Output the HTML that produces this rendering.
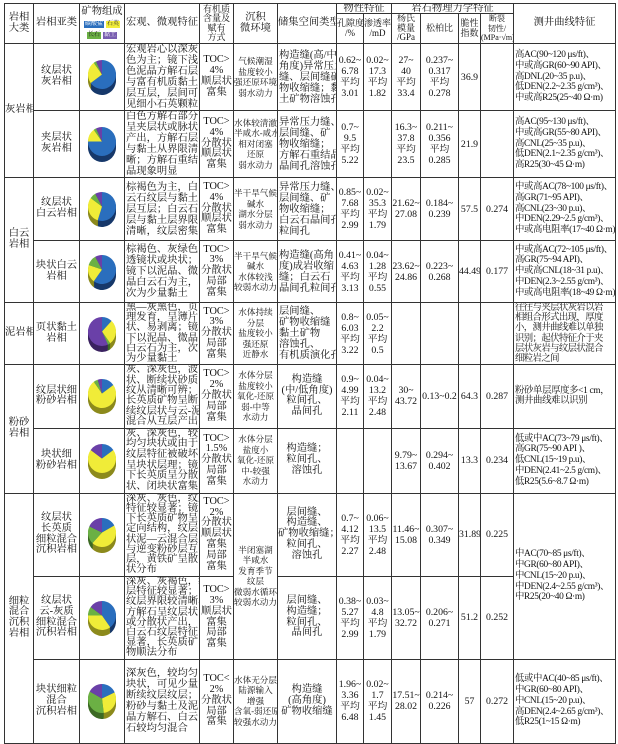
<!DOCTYPE html>
<html><head><meta charset="utf-8">
<style>
html,body{margin:0;padding:0;background:#fff;width:618px;height:737px;overflow:hidden}
body{font-family:"Liberation Serif","Noto Serif CJK SC",serif;color:#111}
table{position:absolute;left:4px;top:3px;border-collapse:collapse;table-layout:fixed;width:611px}
td{border:1px solid #333;padding:0;text-align:center;vertical-align:middle;font-size:10.3px;line-height:10.8px;white-space:nowrap;overflow:hidden}
.l{text-align:left;padding-left:1px;line-height:11px}
.e{font-size:8.6px;line-height:10.5px}
.n{font-size:9.8px;line-height:11px}
.g{font-size:9.4px;line-height:10.8px;text-align:left;padding-left:1px;letter-spacing:-0.35px}
.s{font-size:9px;line-height:9.5px}
.lg{display:inline-block;font-size:6px;line-height:7px;color:#222;padding:0 1px;margin:1px 1px}
</style></head><body>
<table>
<colgroup>
<col style="width:29px"><col style="width:46px"><col style="width:45px"><col style="width:75px"><col style="width:34px"><col style="width:44px"><col style="width:59px"><col style="width:27px"><col style="width:28px"><col style="width:29px"><col style="width:38px"><col style="width:22px"><col style="width:33px"><col style="width:102px">
</colgroup>
<tr style="height:10px">
<td rowspan="2">岩相<br>大类</td><td rowspan="2">岩相亚类</td>
<td rowspan="2"><div>矿物组成</div><div><span class="lg" style="background:#2a6ebd;color:#fff">碳酸盐</span><span class="lg" style="background:#f2ee3a">石英</span></div><div><span class="lg" style="background:#6bb044">长石</span><span class="lg" style="background:#7a5fb0;color:#fff">黏土</span></div></td>
<td rowspan="2">宏观、微观特征</td><td rowspan="2" class="s">有机质<br>含量及<br>赋有<br>方式</td>
<td rowspan="2">沉积<br>微环境</td><td rowspan="2">储集空间类型</td>
<td colspan="2" style="line-height:9px">物性特征</td><td colspan="4" style="line-height:9px">岩石物理力学特征</td>
<td rowspan="2">测井曲线特征</td></tr>
<tr style="height:30px">
<td class="s">孔隙度<br>/%</td><td class="s">渗透率<br>/mD</td><td class="s">杨氏<br>模量<br>/GPa</td><td class="s">松柏比</td><td class="s">脆性<br>指数</td><td class="s" style="font-size:8px">断裂<br>韧性/<br>(MPa·√m)</td></tr>

<tr style="height:63px">
<td rowspan="2">灰岩相</td><td>纹层状<br>灰岩相</td><td><svg class="pie" data-p="65,25,3,7"></svg></td>
<td class="l">宏观岩心以深灰<br>色为主；镜下浅<br>色泥晶方解石层<br>与富有机质黏土<br>层互层，层间可<br>见细小石英颗粒</td>
<td>TOC&gt;<br>4%<br>顺层状<br>富集</td><td class="e">气候潮湿<br>盐度较小<br>强还原环境<br>弱水动力</td>
<td class="l">构造缝(高/中<br>角度)异常压力<br>缝、层间缝矿<br>物收缩缝；黏<br>土矿物溶蚀孔</td>
<td class="n">0.62~<br>6.78<br>平均<br>3.01</td><td class="n">0.02~<br>17.3<br>平均<br>1.82</td><td class="n">27~<br>40<br>平均<br>33.4</td><td class="n">0.237~<br>0.317<br>平均<br>0.278</td><td class="n">36.9</td><td></td>
<td class="g">高AC(90~120 μs/ft)、<br>中或高GR(60~90 API)、<br>高DNL(20~35 p.u)、<br>低DEN(2.2~2.35 g/cm³)、<br>中或高R25(25~40 Ω·m)</td></tr>

<tr style="height:62px">
<td>夹层状<br>灰岩相</td><td><svg class="pie" data-p="75,15,3,7"></svg></td>
<td class="l">白色方解石部分<br>呈夹层状或脉状<br>产出，方解石层<br>与黏土从界限清<br>晰；方解石重结<br>晶现象明显</td>
<td>TOC&gt;<br>4%<br>分散状<br>顺层状<br>富集</td><td class="e">水体较清澈<br>半咸水-咸水<br>相对闭塞<br>还原<br>弱水动力</td>
<td class="l">异常压力缝、<br>层间缝、矿<br>物收缩缝；<br>方解石重结晶<br>晶间孔溶蚀孔</td>
<td class="n">0.7~<br>9.5<br>平均<br>5.22</td><td></td><td class="n">16.3~<br>37.8<br>平均<br>23.5</td><td class="n">0.211~<br>0.356<br>平均<br>0.285</td><td class="n">21.9</td><td></td>
<td class="g">高AC(95~130 μs/ft)、<br>中或高GR(55~80 API)、<br>高CNL(25~35 p.u)、<br>低DEN(2.1~2.35 g/cm³)、<br>高R25(30~45 Ω·m)</td></tr>

<tr style="height:63px">
<td rowspan="2">白云<br>岩相</td><td>纹层状<br>白云岩相</td><td><svg class="pie" data-p="55,30,7,8"></svg></td>
<td class="l">棕褐色为主，白<br>云石纹层与黏土<br>层互层；白云石<br>层与黏土层界限<br>清晰，纹层密集</td>
<td>TOC&gt;<br>4%<br>分散状<br>顺层状<br>富集</td><td class="e">半干旱气候<br>碱水<br>湖水分层<br>弱水动力</td>
<td class="l">异常压力缝、<br>层间缝、矿<br>物收缩缝；<br>白云石晶间孔<br>粒间孔</td>
<td class="n">0.85~<br>7.68<br>平均<br>2.99</td><td class="n">0.02~<br>35.3<br>平均<br>1.79</td><td class="n">21.62~<br>27.08</td><td class="n">0.184~<br>0.239</td><td class="n">57.5</td><td class="n">0.274</td>
<td class="g">中或高AC(78~100 μs/ft)、<br>高GR(71~95 API)、<br>高CNL(23~30 p.u)、<br>中DEN(2.29~2.5 g/cm³)、<br>中或高电阻率(17~40 Ω·m)</td></tr>

<tr style="height:62px">
<td>块状白云<br>岩相</td><td><svg class="pie" data-p="60,20,12,8"></svg></td>
<td class="l">棕褐色、灰绿色，<br>透镜状或块状；<br>镜下以泥晶、微<br>晶白云石为主，<br>次为少量黏土</td>
<td>TOC&gt;<br>3%<br>分散状<br>局部<br>富集</td><td class="e">半干旱气候<br>碱水<br>水体较浅<br>较弱水动力</td>
<td class="l">构造缝(高角<br>度)成岩收缩<br>缝；白云石<br>晶间孔粒间孔</td>
<td class="n">0.41~<br>4.63<br>平均<br>3.13</td><td class="n">0.04~<br>1.28<br>平均<br>0.55</td><td class="n">23.62~<br>24.86</td><td class="n">0.223~<br>0.268</td><td class="n">44.49</td><td class="n">0.177</td>
<td class="g">中或高AC(72~105 μs/ft)、<br>高GR(75~94 API)、<br>中或高CNL(18~31 p.u)、<br>中DEN(2.3~2.55 g/cm³)、<br>中或高电阻率(18~49 Ω·m)</td></tr>

<tr style="height:61px">
<td>泥岩相</td><td>页状黏土<br>岩相</td><td><svg class="pie" data-p="12,28,3,57"></svg></td>
<td class="l" style="line-height:10.2px">黑—灰黑色，页<br>理发育，呈薄片<br>状、易剥离；镜<br>下以泥晶、微晶<br>白云石为主，次<br>为少量黏土</td>
<td>TOC&gt;<br>3%<br>分散状<br>局部<br>富集</td><td class="e">水体持续<br>分层<br>盐度较小<br>强还原<br>近静水</td>
<td class="l">层间缝、<br>矿物收缩缝<br>黏土矿物<br>溶蚀孔、<br>有机质演化孔</td>
<td class="n">0.8~<br>6.03<br>平均<br>3.22</td><td class="n">0.05~<br>2.2<br>平均<br>0.5</td><td></td><td></td><td></td><td></td>
<td class="g" style="letter-spacing:-0.6px;line-height:10.2px">往往与夹层状灰岩以岩<br>相组合形式出现，厚度<br>小，测井曲线难以单独<br>识别；起伏特征介于夹<br>层状灰岩与纹层状混合<br>细粒岩之间</td></tr>

<tr style="height:63px">
<td rowspan="2">粉砂<br>岩相</td><td>纹层状细<br>粉砂岩相</td><td><svg class="pie" data-p="15,75,5,5"></svg></td>
<td class="l" style="line-height:10.4px">灰、深灰色，波<br>状、断续状砂质<br>纹从清晰可辨；<br>长英质矿物呈断<br>续纹层状与云-泥<br>混合从互层产出</td>
<td>TOC&gt;<br>2%<br>分散状<br>局部<br>富集</td><td class="e">水体分层<br>盐度较小<br>氧化-还原<br>弱-中等<br>水动力</td>
<td>构造缝<br>(中/低角度)<br>粒间孔、<br>晶间孔</td>
<td class="n">0.9~<br>4.99<br>平均<br>2.11</td><td class="n">0.04~<br>13.2<br>平均<br>2.48</td><td class="n">30~<br>43.72</td><td class="n">0.13~0.2</td><td class="n">64.3</td><td class="n">0.287</td>
<td class="g">粉砂单层厚度多&lt;1 cm，<br>测井曲线难以识别</td></tr>

<tr style="height:65px">
<td>块状细<br>粉砂岩相</td><td><svg class="pie" data-p="15,70,0,15"></svg></td>
<td class="l" style="line-height:10.6px">灰、深灰色，较<br>均匀块状或由于<br>纹层特征被破坏<br>呈块状层理；镜<br>下长英质呈分散<br>状、闭块状富集</td>
<td>TOC&gt;<br>1.5%<br>分散状<br>局部<br>富集</td><td class="e">水体分层<br>盐度小<br>氧化-还原<br>中-较强<br>水动力</td>
<td>构造缝；<br>粒间孔、<br>溶蚀孔</td>
<td></td><td></td><td class="n">9.79~<br>13.67</td><td class="n">0.294~<br>0.402</td><td class="n">13.3</td><td class="n">0.234</td>
<td class="g">低或中AC(73~79 μs/ft)、<br>高GR(75~90 API )、<br>低CNL(15~19 p.u)、<br>中DEN(2.41~2.5 g/cm)、<br>低R25(5.6~8.7 Ω·m)</td></tr>

<tr style="height:83px">
<td rowspan="3">细粒<br>混合<br>沉积<br>岩相</td><td>纹层状<br>长英质<br>细粒混合<br>沉积岩相</td><td><svg class="pie" data-p="17,45,20,18"></svg></td>
<td class="l" style="line-height:10.2px">深灰、灰色，纹层<br>特征较显著；镜<br>下长英质矿物呈<br>定向结构，纹层<br>状泥—云混合层<br>与逆变粉砂层互<br>层，黄铁矿呈散<br>状分布</td>
<td>TOC&gt;<br>2%<br>分散状<br>顺层状<br>富集<br>局部<br>富集</td><td rowspan="2" class="e">半闭塞湖<br>半咸水<br>发育季节<br>纹层<br>微弱水循环<br>较弱水动力</td>
<td>层间缝、<br>构造缝、<br>矿物收缩缝；<br>粒间孔、<br>溶蚀孔</td>
<td class="n">0.7~<br>4.12<br>平均<br>2.27</td><td class="n">0.06~<br>13.5<br>平均<br>2.48</td><td class="n">11.46~<br>15.08</td><td class="n">0.307~<br>0.349</td><td class="n">31.89</td><td class="n">0.225</td>
<td rowspan="2" class="g">中AC(70~85 μs/ft)、<br>中GR(60~80 API)、<br>中CNL(15~20 p.u)、<br>中DEN(2.4~2.55 g/cm³)、<br>中R25(20~40 Ω·m)</td></tr>

<tr style="height:83px">
<td>纹层状<br>云-灰质<br>细粒混合<br>沉积岩相</td><td><svg class="pie" data-p="40,35,10,15"></svg></td>
<td class="l" style="line-height:10.1px">深灰、灰褐色，纹<br>层特征较显著；<br>纹层界限较清晰、<br>方解石呈纹层状<br>或分散状产出，<br>白云石纹层特征<br>显著，长英质矿<br>物顺法分布</td>
<td>TOC&gt;<br>3%<br>顺层状<br>富集<br>局部<br>富集</td>
<td>层间缝、<br>构造缝；<br>粒间孔、<br>晶间孔</td>
<td class="n">0.38~<br>5.27<br>平均<br>2.99</td><td class="n">0.03~<br>4.8<br>平均<br>1.79</td><td class="n">13.05~<br>32.72</td><td class="n">0.206~<br>0.271</td><td class="n">51.2</td><td class="n">0.252</td></tr>

<tr style="height:84px">
<td>块状细粒<br>混合<br>沉积岩相</td><td><svg class="pie" data-p="18,30,35,17"></svg></td>
<td class="l">深灰色，较均匀<br>块状，可见少量<br>断续纹层纹层；<br>粉砂与黏土及泥<br>晶方解石、白云<br>石较均匀混合</td>
<td>TOC&lt;<br>2%<br>分散状<br>局部<br>富集</td><td class="e">水体无分层<br>陆源输入<br>增强<br>含氧-弱还原<br>较强水动力</td>
<td>构造缝<br>(高角度)<br>矿物收缩缝</td>
<td class="n">1.96~<br>3.36<br>平均<br>6.48</td><td class="n">0.02~<br>1.7<br>平均<br>1.45</td><td class="n">17.51~<br>28.02</td><td class="n">0.214~<br>0.226</td><td class="n">57</td><td class="n">0.272</td>
<td class="g">低或中AC(40~85 μs/ft)、<br>中GR(60~80 API)、<br>中CNL(15~20 p.u)、<br>高DEN(2.4~2.65 g/cm³)、<br>低R25(1~15 Ω·m)</td></tr>
</table>
<script>
var cols=["#2a6ebd","#f0ec38","#6bb044","#6a40a8"],dk=["#17386a","#8c8a1c","#3c6a24","#3a2260"];
document.querySelectorAll("svg.pie").forEach(function(s){
 var p=s.getAttribute("data-p").split(",").map(Number),W=32,H=36,cx=16,rx=14,ry=14.5,th=6;
 s.setAttribute("width",W);s.setAttribute("height",H);s.setAttribute("viewBox","0 0 "+W+" "+H);
 var out="";
 function pie(cy,c){var a=-Math.PI/2,r="";for(var i=0;i<4;i++){if(!p[i])continue;var b=a+p[i]/100*2*Math.PI;
  var x1=cx+rx*Math.cos(a),y1=cy+ry*Math.sin(a),x2=cx+rx*Math.cos(b),y2=cy+ry*Math.sin(b);
  r+='<path d="M'+cx+','+cy+' L'+x1.toFixed(2)+','+y1.toFixed(2)+' A'+rx+','+ry+' 0 '+((b-a)>Math.PI?1:0)+' 1 '+x2.toFixed(2)+','+y2.toFixed(2)+' Z" fill="'+c[i]+'"/>';a=b;}return r;}
 for(var k=th;k>0;k--)out+=pie(15.5+k,dk);
 out+=pie(15.5,cols);
 s.innerHTML=out;s.style.display="block";s.style.margin="0 auto";
});
</script>
</body></html>
